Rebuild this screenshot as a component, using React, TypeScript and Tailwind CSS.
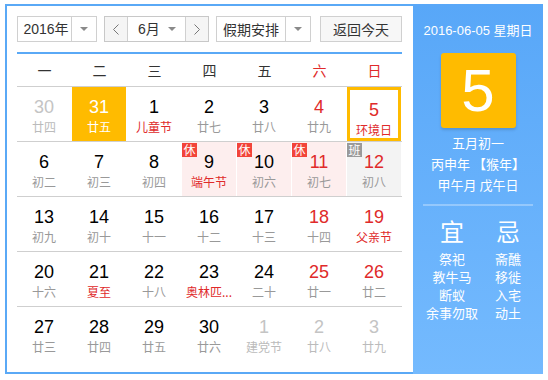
import React from "react";

type Day = {
  n: number;
  sub: string;
  other?: boolean;
  red?: boolean;
  fest?: boolean;
  today?: boolean;
  selected?: boolean;
  badge?: "休" | "班";
};

const weeks: Day[][] = [
  [
    { n: 30, sub: "廿四", other: true },
    { n: 31, sub: "廿五", today: true },
    { n: 1, sub: "儿童节", fest: true },
    { n: 2, sub: "廿七" },
    { n: 3, sub: "廿八" },
    { n: 4, sub: "廿九", red: true },
    { n: 5, sub: "环境日", red: true, fest: true, selected: true },
  ],
  [
    { n: 6, sub: "初二" },
    { n: 7, sub: "初三" },
    { n: 8, sub: "初四" },
    { n: 9, sub: "端午节", fest: true, badge: "休" },
    { n: 10, sub: "初六", badge: "休" },
    { n: 11, sub: "初七", red: true, badge: "休" },
    { n: 12, sub: "初八", red: true, badge: "班" },
  ],
  [
    { n: 13, sub: "初九" },
    { n: 14, sub: "初十" },
    { n: 15, sub: "十一" },
    { n: 16, sub: "十二" },
    { n: 17, sub: "十三" },
    { n: 18, sub: "十四", red: true },
    { n: 19, sub: "父亲节", red: true, fest: true },
  ],
  [
    { n: 20, sub: "十六" },
    { n: 21, sub: "夏至", fest: true },
    { n: 22, sub: "十八" },
    { n: 23, sub: "奥林匹...", fest: true },
    { n: 24, sub: "二十" },
    { n: 25, sub: "廿一", red: true },
    { n: 26, sub: "廿二", red: true },
  ],
  [
    { n: 27, sub: "廿三" },
    { n: 28, sub: "廿四" },
    { n: 29, sub: "廿五" },
    { n: 30, sub: "廿六" },
    { n: 1, sub: "建党节", other: true },
    { n: 2, sub: "廿八", other: true },
    { n: 3, sub: "廿九", other: true },
  ],
];

const numFont = "font-['Liberation_Sans','Noto_Sans_CJK_SC',sans-serif]";

function Caret() {
  return <span className="w-0 h-0 border-l-[4px] border-r-[4px] border-t-[4px] border-l-transparent border-r-transparent border-t-[#8a8a8a]" />;
}

function Chevron({ dir }: { dir: "left" | "right" }) {
  return (
    <svg width="8" height="11" viewBox="0 0 8 11" fill="none" stroke="#777" strokeWidth="1">
      {dir === "left" ? <polyline points="6.5,0.5 1.5,5.5 6.5,10.5" /> : <polyline points="1.5,0.5 6.5,5.5 1.5,10.5" />}
    </svg>
  );
}

function Cell({ d }: { d: Day }) {
  let bg = "";
  if (d.badge === "休") bg = "bg-[#fdeeee]";
  if (d.badge === "班") bg = "bg-[#f3f3f3]";
  if (d.today) bg = "bg-[#ffbb00]";

  let numColor = "text-black";
  if (d.red) numColor = "text-[#e02a2a]";
  if (d.other) numColor = "text-[#c4c4c4]";
  if (d.today) numColor = "text-white";

  let subColor = "text-[#999]";
  if (d.fest) subColor = "text-[#e02a2a]";
  if (d.other) subColor = "text-[#bbb]";
  if (d.today) subColor = "text-white";

  return (
    <div className={`relative w-[54px] h-[54px] flex flex-col items-center pt-[10px] ${bg} ${d.selected ? "border-[3px] border-[#ffbb00] pt-[7px]" : ""}`}>
      {d.badge && (
        <span className={`absolute left-0 top-px w-[15px] h-[14px] flex items-center justify-center text-[12px] leading-none text-white ${d.badge === "休" ? "bg-[#f2443a]" : "bg-[#9a9a9a]"}`}>
          {d.badge}
        </span>
      )}
      <span className={`text-[18px] leading-[20px] ${numFont} ${numColor}`}>{d.n}</span>
      <span className={`mt-[2px] text-[12px] leading-[16px] whitespace-nowrap ${subColor}`}>{d.sub}</span>
    </div>
  );
}

export default function App() {
  const heads = ["一", "二", "三", "四", "五", "六", "日"];
  return (
    <div className="ml-[5px] mt-[4px] w-[538px] h-[370px] flex font-['Noto_Sans_CJK_SC','Liberation_Sans',sans-serif]">
      <div className="w-[408px] h-full bg-white border-l-2 border-t-2 border-b-2 border-[#5aa9f6] pl-[10px] pr-[11px] pt-[10px]">
        <div className="flex items-center h-[26px] text-[14px] text-[#333]">
          <div className="w-[80px] h-[26px] flex border border-[#d0d0d0]">
            <span className={`flex-1 flex items-center justify-center pl-[3px] ${numFont}`}>2016年</span>
            <span className="w-[25px] border-l border-[#d0d0d0] flex items-center justify-center">
              <Caret />
            </span>
          </div>
          <div className="ml-[7px] w-[105px] h-[26px] flex border border-[#c8c8c8]">
            <span className="w-[22px] bg-[#f5f5f5] flex items-center justify-center">
              <Chevron dir="left" />
            </span>
            <span className="flex-1 border-l border-r border-[#d0d0d0] flex items-center justify-between pl-[10px] pr-[9px]">
              <span className={numFont}>6月</span>
              <Caret />
            </span>
            <span className="w-[22px] bg-[#f5f5f5] flex items-center justify-center">
              <Chevron dir="right" />
            </span>
          </div>
          <div className="ml-[7px] w-[95px] h-[26px] flex border border-[#d0d0d0]">
            <span className="flex-1 flex items-center justify-center">假期安排</span>
            <span className="w-[25px] border-l border-[#d0d0d0] flex items-center justify-center">
              <Caret />
            </span>
          </div>
          <button className="ml-[9px] w-[82px] h-[26px] bg-[#f7f7f7] border border-[#d0d0d0] flex items-center justify-center">返回今天</button>
        </div>
        <div className="mt-[10px] h-[2px] bg-[#5aa9f6]" />
        <div className="grid grid-cols-7 h-[33px] items-center text-[14px] border-b border-[#cfcfcf]">
          {heads.map((h, i) => (
            <span key={h} className={`text-center ${i >= 5 ? "text-[#e02a2a]" : "text-[#333]"}`}>{h}</span>
          ))}
        </div>
        {weeks.map((w, i) => (
          <div key={i} className={`grid grid-cols-7 ${i < 4 ? "border-b border-[#cfcfcf]" : ""}`}>
            {w.map((d, j) => (
              <Cell key={j} d={d} />
            ))}
          </div>
        ))}
      </div>
      <div className="w-[130px] h-full bg-gradient-to-b from-[#58a7f8] to-[#74bafe] text-white flex flex-col items-center">
        <div className={`mt-[17px] text-[13px] leading-[20px] ${numFont}`}>2016-06-05 星期日</div>
        <div className="mt-[12px] w-[75px] h-[75px] rounded-[3px] bg-[#ffbb00] shadow-[0_2px_3px_rgba(0,0,0,0.15)] flex items-center justify-center">
          <span className={`text-[60px] leading-none ${numFont}`}>5</span>
        </div>
        <div className="mt-[4px] text-[13px] leading-[21px] text-center">
          <div>五月初一</div>
          <div>丙申年 【猴年】</div>
          <div>甲午月 戊午日</div>
        </div>
        <div className="mt-[9px] w-[110px] h-[2px] bg-white/30" />
        <div className="mt-[10px] flex w-full text-[13px] leading-[18px]">
          <div className="w-[68px] flex flex-col items-center pl-[10px]">
            <span className="text-[24px] leading-[30px] mb-[4px]">宜</span>
            <span>祭祀</span>
            <span>教牛马</span>
            <span>断蚁</span>
            <span>余事勿取</span>
          </div>
          <div className="flex-1 flex flex-col items-center pr-[8px]">
            <span className="text-[24px] leading-[30px] mb-[4px]">忌</span>
            <span>斋醮</span>
            <span>移徙</span>
            <span>入宅</span>
            <span>动土</span>
          </div>
        </div>
      </div>
    </div>
  );
}
